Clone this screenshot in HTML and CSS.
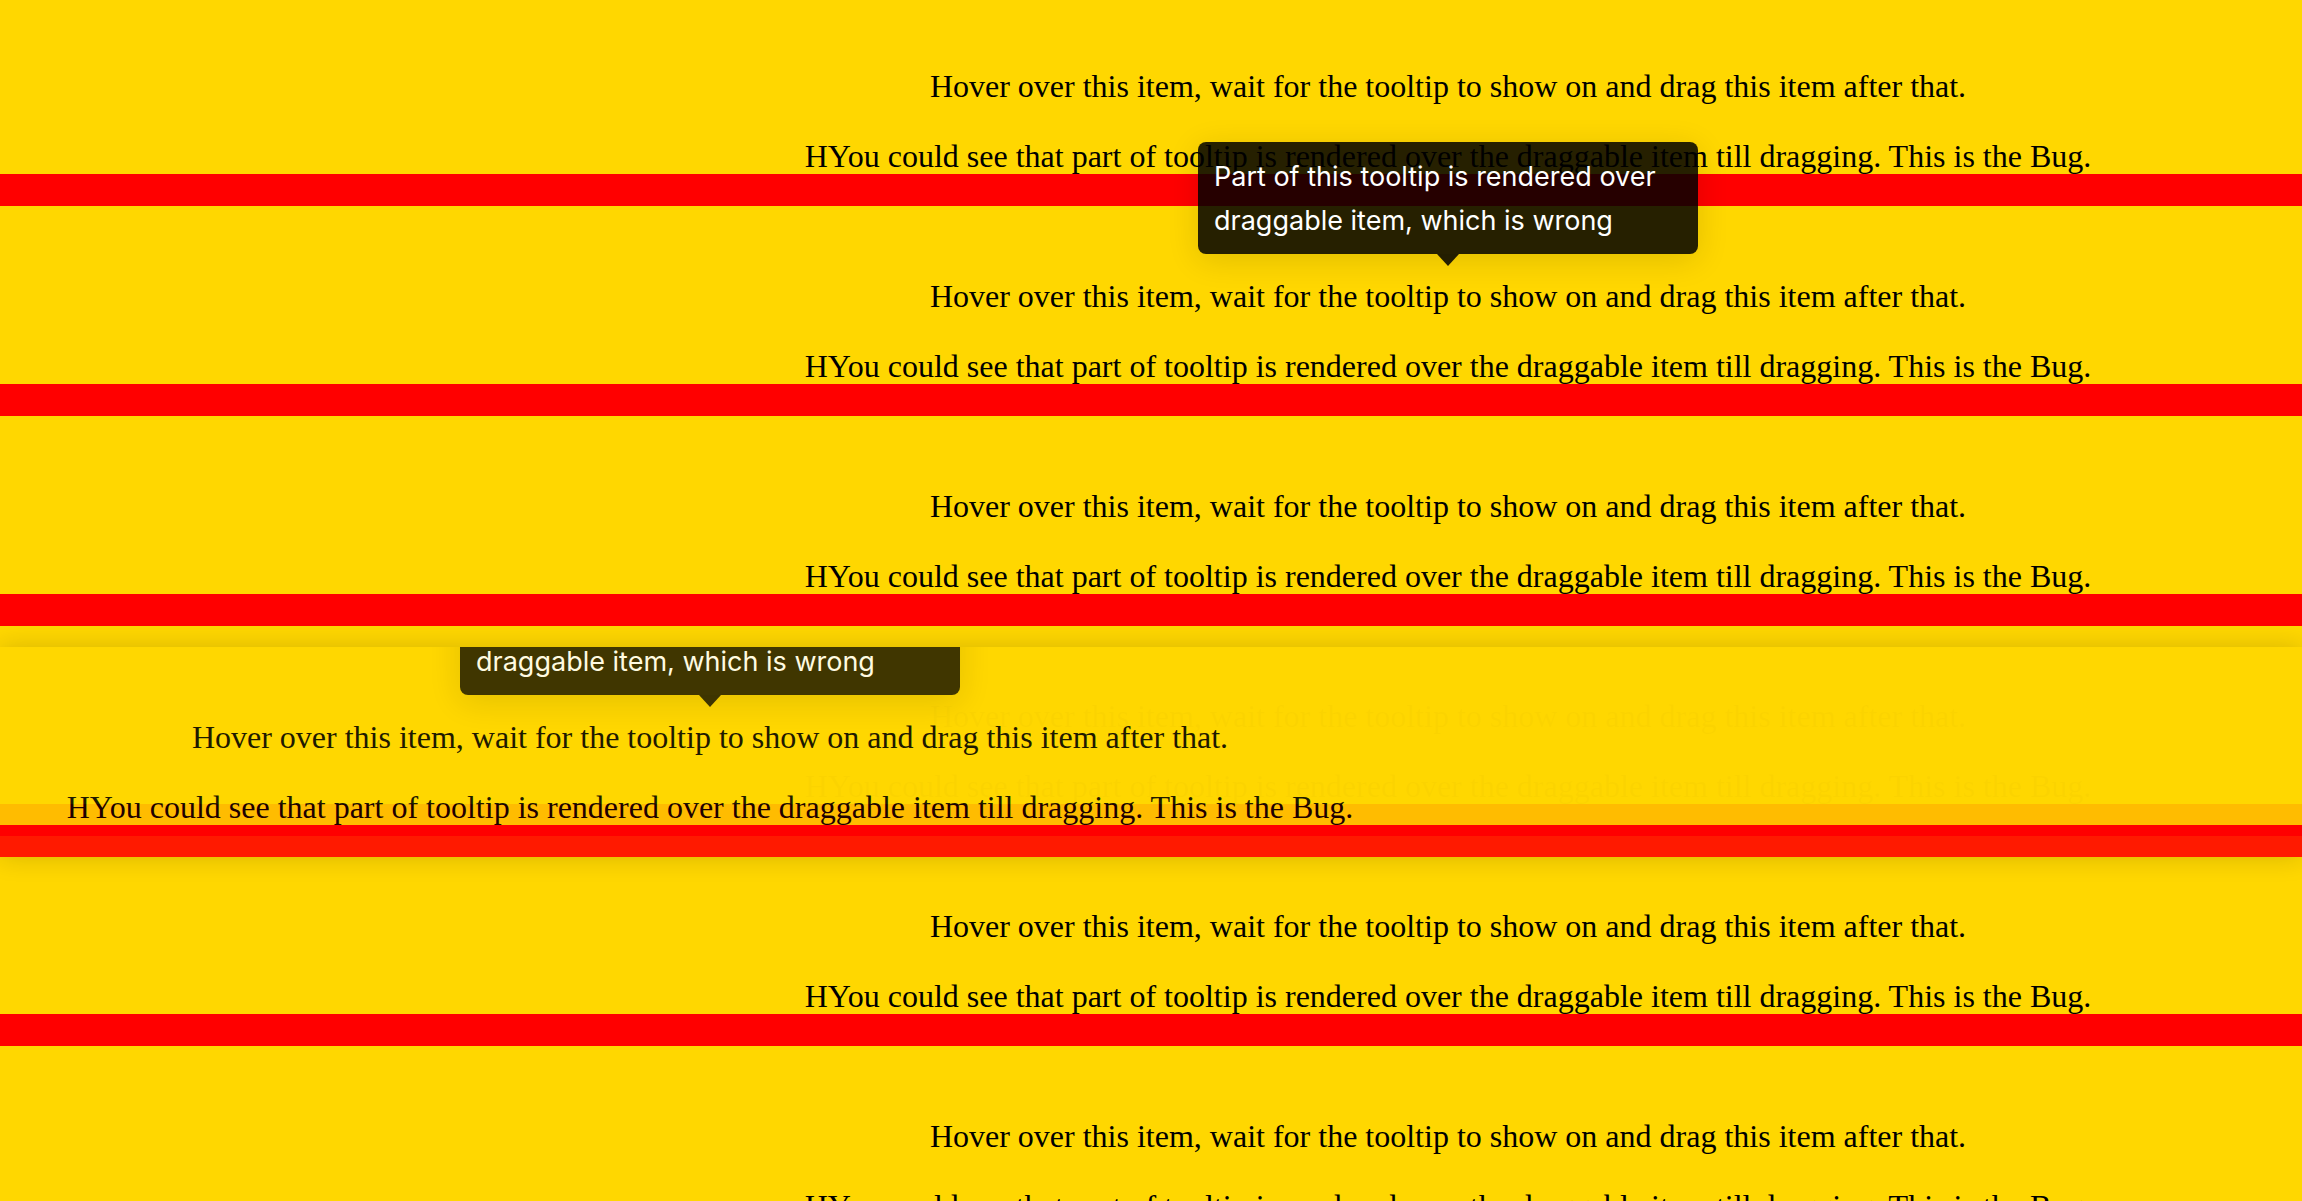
FILE: index.html
```html
<!DOCTYPE html>
<html lang="en">
<head>
<meta charset="utf-8">
<title>Tooltip drag bug</title>
<link rel="stylesheet" href="styles.css">
</head>
<body>
<div class="list">
  <div class="item">
    <div class="content">
      <p>Hover over this item, wait for the tooltip to show on and drag this item after that.</p>
      <p>HYou could see that part of tooltip is rendered over the draggable item till dragging. This is the Bug.</p>
    </div>
  </div>
  <div class="item">
    <div class="content">
      <div class="tooltip">Part of this tooltip is rendered over draggable item, which is wrong</div>
      <p>Hover over this item, wait for the tooltip to show on and drag this item after that.</p>
      <p>HYou could see that part of tooltip is rendered over the draggable item till dragging. This is the Bug.</p>
    </div>
  </div>
  <div class="item">
    <div class="content">
      <p>Hover over this item, wait for the tooltip to show on and drag this item after that.</p>
      <p>HYou could see that part of tooltip is rendered over the draggable item till dragging. This is the Bug.</p>
    </div>
  </div>
  <div class="item ghost">
    <div class="content">
      <p>Hover over this item, wait for the tooltip to show on and drag this item after that.</p>
      <p>HYou could see that part of tooltip is rendered over the draggable item till dragging. This is the Bug.</p>
    </div>
  </div>
  <div class="item">
    <div class="content">
      <p>Hover over this item, wait for the tooltip to show on and drag this item after that.</p>
      <p>HYou could see that part of tooltip is rendered over the draggable item till dragging. This is the Bug.</p>
    </div>
  </div>
  <div class="item">
    <div class="content">
      <p>Hover over this item, wait for the tooltip to show on and drag this item after that.</p>
      <p>HYou could see that part of tooltip is rendered over the draggable item till dragging. This is the Bug.</p>
    </div>
  </div>
  <div class="item dragged">
    <div class="content">
      <div class="tooltip">Part of this tooltip is rendered over draggable item, which is wrong</div>
      <p>Hover over this item, wait for the tooltip to show on and drag this item after that.</p>
      <p>HYou could see that part of tooltip is rendered over the draggable item till dragging. This is the Bug.</p>
    </div>
  </div>
</div>
</body>
</html>
```

FILE: styles.css
```css
html, body {
  margin: 0;
  padding: 0;
  background: #ffd700;
  overflow: hidden;
}

.list {
  position: relative;
  margin-top: -4px;
  font-family: "Liberation Serif", "Times New Roman", serif;
  font-size: 32px;
  line-height: 36px;
  color: #000;
}

.item {
  background: #ffd700;
  padding: 72px 0 0 594px;
  border-bottom: 32px solid #ff0000;
  text-align: center;
}

.content {
  position: relative;
}

.content p {
  margin: 0;
  white-space: nowrap;
}

.content p:first-of-type {
  margin-bottom: 34px;
}

.ghost .content p {
  color: rgba(0, 0, 0, 0.13);
}

.tooltip {
  position: absolute;
  left: 50%;
  top: -136px;
  transform: translateX(-50%);
  width: 500px;
  box-sizing: border-box;
  padding: 13px 16px 11px;
  background: rgba(0, 0, 0, 0.85);
  color: #fff;
  font-family: Inter, "Noto Sans", sans-serif;
  font-size: 27px;
  line-height: 44px;
  text-align: left;
  border-radius: 8px;
  box-shadow: 0 6px 32px rgba(0, 0, 0, 0.12);
}

.tooltip::after {
  content: "";
  position: absolute;
  left: 50%;
  top: 100%;
  margin-left: -11px;
  border-left: 11px solid transparent;
  border-right: 11px solid transparent;
  border-top: 12px solid rgba(0, 0, 0, 0.85);
}

.dragged {
  position: absolute;
  top: 651px;
  left: 0;
  right: 0;
  padding-left: 0;
  padding-right: 882px;
  opacity: 0.88;
  overflow: hidden;
  box-shadow: 0 0 24px rgba(0, 0, 0, 0.18);
}
```
